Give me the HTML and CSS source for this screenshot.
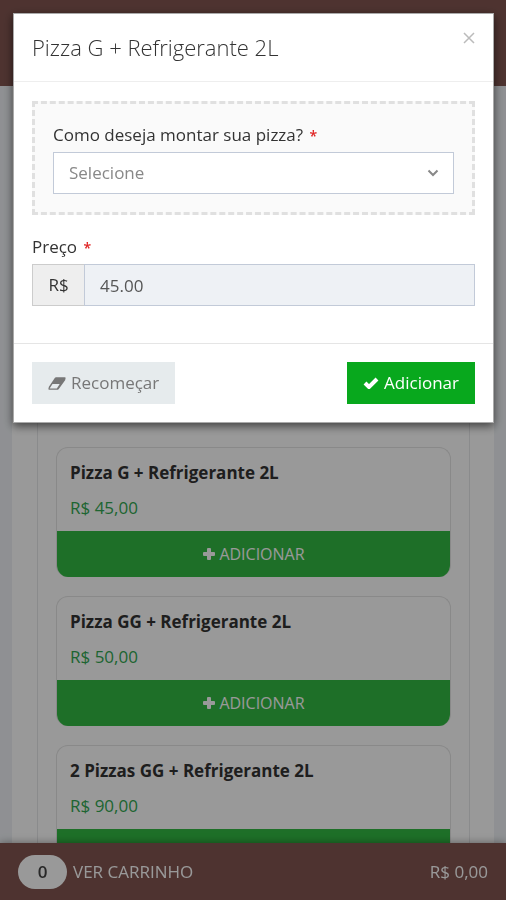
FILE: index.html
```
<!DOCTYPE html>
<html lang="pt-BR">
<head>
    <meta charset="UTF-8">
    <meta name="viewport" content="width=device-width, initial-scale=1.0">
    <title>Pizzaria</title>
    <link rel="stylesheet" href="styles.css">
</head>
<body>
    <!-- Page -->
    <header class="page-header"></header>

    <main class="page-content">
        <div class="product-list">
            <div class="product">
                <h2>Pizza G + Refrigerante 2L</h2>
                <p class="price">R$ 45,00</p>
                <button type="button" class="add-button">
                    <svg class="icon" viewBox="0 0 14 14" aria-hidden="true"><path d="M6 1h2q1 0 1 1v3h3q1 0 1 1v2q0 1-1 1H9v3q0 1-1 1H6q-1 0-1-1V9H2Q1 9 1 8V6q0-1 1-1h3V2q0-1 1-1z"/></svg>
                    ADICIONAR
                </button>
            </div>
            <div class="product">
                <h2>Pizza GG + Refrigerante 2L</h2>
                <p class="price">R$ 50,00</p>
                <button type="button" class="add-button">
                    <svg class="icon" viewBox="0 0 14 14" aria-hidden="true"><path d="M6 1h2q1 0 1 1v3h3q1 0 1 1v2q0 1-1 1H9v3q0 1-1 1H6q-1 0-1-1V9H2Q1 9 1 8V6q0-1 1-1h3V2q0-1 1-1z"/></svg>
                    ADICIONAR
                </button>
            </div>
            <div class="product">
                <h2>2 Pizzas GG + Refrigerante 2L</h2>
                <p class="price">R$ 90,00</p>
                <button type="button" class="add-button">
                    <svg class="icon" viewBox="0 0 14 14" aria-hidden="true"><path d="M6 1h2q1 0 1 1v3h3q1 0 1 1v2q0 1-1 1H9v3q0 1-1 1H6q-1 0-1-1V9H2Q1 9 1 8V6q0-1 1-1h3V2q0-1 1-1z"/></svg>
                    ADICIONAR
                </button>
            </div>
        </div>
    </main>

    <!-- Cart bar -->
    <a href="#carrinho" class="cart-bar">
        <span class="cart-count">0</span>
        <span class="cart-label">VER CARRINHO</span>
        <span class="cart-total">R$ 0,00</span>
    </a>

    <!-- Modal -->
    <div class="backdrop">
        <form class="modal" role="dialog" aria-labelledby="modalTitle">
            <div class="modal-header">
                <h1 id="modalTitle">Pizza G + Refrigerante 2L</h1>
                <button type="button" class="close" aria-label="Fechar">
                    <svg viewBox="0 0 12 12" aria-hidden="true"><path d="M1 1l10 10M11 1L1 11"/></svg>
                </button>
            </div>
            <div class="modal-body">
                <div class="option-box">
                    <label for="montagem">Como deseja montar sua pizza? <span class="required">*</span></label>
                    <div class="select-wrap">
                        <select id="montagem" name="montagem" required>
                            <option value="" selected>Selecione</option>
                        </select>
                        <svg class="arrow" viewBox="0 0 12 8" aria-hidden="true"><path d="M1.500 1.500L6 6l4.500-4.500"/></svg>
                    </div>
                </div>
                <label for="preco">Preço <span class="required">*</span></label>
                <div class="input-group">
                    <span class="addon">R$</span>
                    <input type="text" id="preco" name="preco" value="45.00" readonly>
                </div>
            </div>
            <div class="modal-footer">
                <button type="reset" class="btn btn-default">
                    <svg class="icon-eraser" viewBox="0 0 20 14" aria-hidden="true"><path fill-rule="evenodd" d="M9 0h9.500q1.500 0 1 1.500L19 3.500 12 13q-.8 1-2 1H1.500Q0 14 .5 12.500L1 10.500 7.500 1Q8 0 9 0zM5 7.500L1.800 12.500h8L13 7.500z"/></svg>
                    Recomeçar
                </button>
                <button type="submit" class="btn btn-success">
                    <svg class="icon-check" viewBox="0 0 16 12" aria-hidden="true"><path d="M2 6l4 4 8-8"/></svg>
                    Adicionar
                </button>
            </div>
        </form>
    </div>
</body>
</html>
```
FILE: styles.css
```
* {
    box-sizing: border-box;
}
body {
    margin: 0;
    height: 100vh;
    overflow: hidden;
    font-family: "Open Sans", "Noto Sans", sans-serif;
    font-size: 17px;
    line-height: 24px;
    color: #333;
    background-color: #eef1f5;
}
h1, h2, p {
    margin: 0;
}
button, input, select {
    font-family: inherit;
    font-size: inherit;
    line-height: 24px;
}
button {
    cursor: pointer;
}

/* Page */
.page-header {
    height: 86px;
    background-color: #825651;
}
.page-content {
    margin: 0 12px;
    padding: 0 24px 0 25px;
    background-color: #fff;
}
.product-list {
    display: flex;
    flex-direction: column;
    gap: 19px;
    padding: 361px 18px 20px;
    border: 1px solid #e7e8ea;
    border-top: none;
}
.product {
    overflow: hidden;
    border: 1px solid #e4e4e4;
    border-bottom: none;
    border-radius: 12px;
}
.product h2 {
    padding: 13px 13px 0;
    font-size: 17px;
    font-weight: 700;
}
.product .price {
    padding: 11px 13px;
    color: #32a852;
}
.add-button {
    display: flex;
    justify-content: center;
    align-items: center;
    gap: 3px;
    width: 100%;
    height: 46px;
    border: none;
    background-color: #32ba43;
    color: #fff;
    font-size: 16px;
    font-weight: 500;
}
.icon {
    width: 14px;
    height: 14px;
    fill: currentColor;
}

/* Cart bar */
.cart-bar {
    position: fixed;
    left: 0;
    right: 0;
    bottom: 0;
    display: flex;
    align-items: center;
    gap: 6px;
    height: 57px;
    padding: 0 18px;
    background-color: #825651;
    box-shadow: 0 0 8px rgba(0, 0, 0, 0.4);
    color: #fff;
    text-decoration: none;
}
.cart-count {
    width: 49px;
    padding: 5px 0;
    border-radius: 17px;
    background-color: #fff;
    color: #444;
    font-weight: 600;
    text-align: center;
}
.cart-total {
    margin-left: auto;
}

/* Modal */
.backdrop {
    position: fixed;
    top: 0;
    left: 0;
    width: 100%;
    height: 100%;
    padding: 13px 12px 13px 13px;
    background-color: rgba(0, 0, 0, 0.4);
}
.modal {
    background-color: #fff;
    border: 1px solid #aaa;
    box-shadow: 0 3px 9px rgba(0, 0, 0, 0.6);
}
.modal-header {
    display: flex;
    justify-content: space-between;
    align-items: flex-start;
    padding: 18px;
    border-bottom: 1px solid #eee;
}
.modal-header h1 {
    font-size: 22px;
    font-weight: 300;
    line-height: 31px;
}
.close {
    padding: 0;
    border: none;
    background: none;
    line-height: 0;
}
.close svg {
    width: 12px;
    height: 12px;
    fill: none;
    stroke: #bbb;
    stroke-width: 1.5;
}
.modal-body {
    padding: 19px 18px 37px;
}
.modal-body label {
    display: block;
    margin-bottom: 5px;
}
.option-box {
    margin-bottom: 20px;
    padding: 19px 18px 18px;
    border: 3px dashed #e0e0e0;
    background-color: #fafafa;
}
.required {
    margin-left: 2px;
    color: #e02222;
    font-size: 14px;
    font-weight: 600;
    line-height: 1;
}
.select-wrap {
    position: relative;
}
select {
    display: block;
    width: 100%;
    height: 42px;
    padding: 0 15px;
    appearance: none;
    border: 1px solid #c2cad8;
    border-radius: 0;
    background-color: #fff;
    color: #888;
}
.arrow {
    position: absolute;
    top: 17px;
    right: 15px;
    width: 12px;
    height: 8px;
    fill: none;
    stroke: #888;
    stroke-width: 2;
    pointer-events: none;
}
.input-group {
    display: flex;
}
.addon {
    width: 52px;
    padding: 8px 0;
    border: 1px solid #ccc;
    border-right: none;
    background-color: #eee;
    text-align: center;
}
.input-group input {
    flex: 1;
    min-width: 0;
    height: 42px;
    padding: 0 15px;
    border: 1px solid #c2cad8;
    border-radius: 0;
    background-color: #eef1f5;
    color: #555;
}
.modal-footer {
    display: flex;
    justify-content: space-between;
    padding: 18px;
    border-top: 1px solid #e5e5e5;
}
.btn {
    display: flex;
    align-items: center;
    gap: 5px;
    height: 42px;
    padding: 0 16px;
    border: none;
}
.btn-default {
    background-color: #e6ebed;
    color: #777;
}
.btn-success {
    background-color: #08a81d;
    color: #fff;
    font-weight: 500;
}
.icon-eraser {
    width: 18px;
    height: 13px;
    fill: currentColor;
}
.icon-check {
    width: 16px;
    height: 12px;
    fill: none;
    stroke: currentColor;
    stroke-width: 4;
}
```
